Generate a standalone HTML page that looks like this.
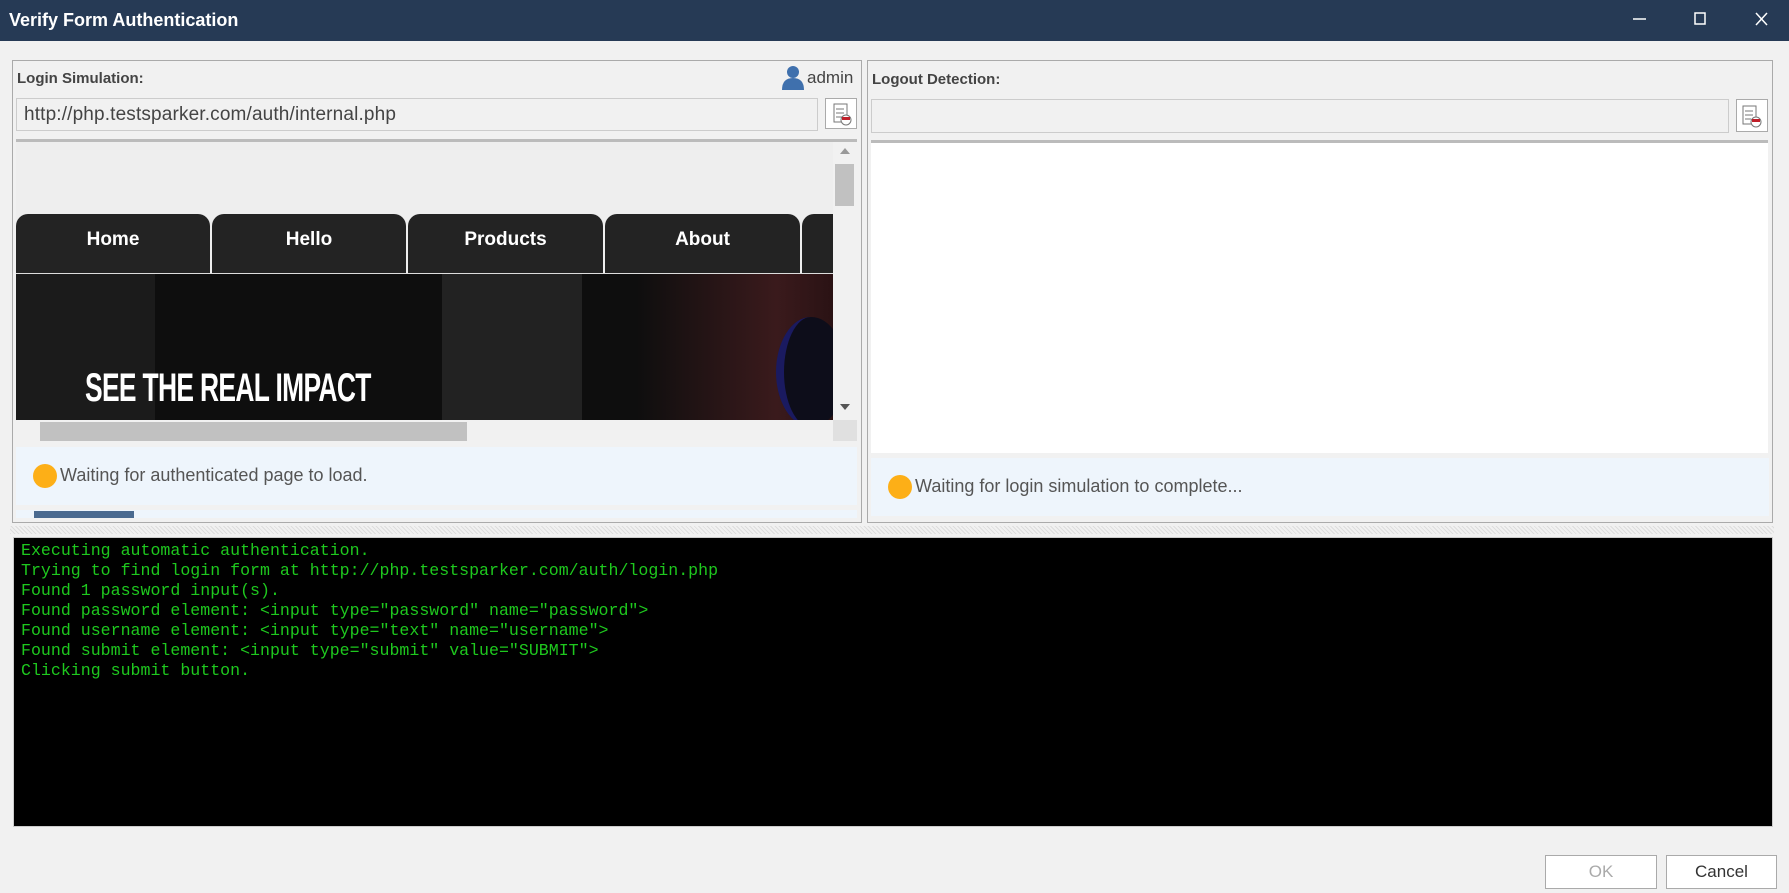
<!DOCTYPE html>
<html><head><meta charset="utf-8"><style>
*{margin:0;padding:0;box-sizing:border-box}
body{width:1789px;height:893px;background:#f1f1f1;position:relative;overflow:hidden;font-family:"Liberation Sans",sans-serif}
.a{position:absolute}
.title{left:0;top:0;width:1789px;height:41px;background:#263a55;color:#fff;font-weight:bold;font-size:18px;line-height:41px;padding-left:9px}
.panel{border:1px solid #aaa;background:#f1f1f1}
.lbl{font-weight:bold;font-size:15px;color:#444}
.box{border:1px solid #ccc;background:#f1f1f1;font-size:19px;color:#444;line-height:31px;padding-left:7px;letter-spacing:0.15px}
.btn{border:1px solid #aaa;background:#fff}
.stat{background:#eef5fc;font-size:18px;color:#555}
.dot{width:24px;height:24px;border-radius:50%;background:#fdaf17}
.tab{top:72px;height:59px;background:#232323;border-radius:12px 12px 0 0;color:#fff;font-weight:bold;font-size:19px;text-align:center;line-height:52px}
.term{font-family:"Liberation Mono",monospace;font-size:16.6px;color:#1ec81e;line-height:20px;white-space:pre}
</style></head><body>
<div class="a title">Verify Form Authentication</div>
<svg class="a" style="left:1630px;top:8px" width="150" height="22"><line x1="3" y1="11" x2="16" y2="11" stroke="#fff" stroke-width="1.5"/><rect x="65" y="5" width="10" height="11" fill="none" stroke="#fff" stroke-width="1.5"/><path d="M126 5L137 17M137 5L126 17" stroke="#fff" stroke-width="1.5"/></svg>

<div class="a panel" style="left:12px;top:60px;width:850px;height:463px"></div>
<div class="a lbl" style="left:17px;top:70px">Login Simulation:</div>
<svg class="a" style="left:780px;top:65px" width="26" height="25"><circle cx="13" cy="7" r="6" fill="#3f70ad"/><path d="M2 25Q2 13 13 13Q24 13 24 25Z" fill="#3f70ad"/></svg>
<div class="a" style="left:807px;top:68px;font-size:17px;color:#444">admin</div>
<div class="a box" style="left:16px;top:98px;width:802px;height:33px">http://php.testsparker.com/auth/internal.php</div>
<div class="a btn" style="left:825px;top:98px;width:32px;height:31px"><svg width="30" height="29"><rect x="8" y="5" width="13" height="18" fill="#fff" stroke="#777"/><path d="M10 10h8M10 14h8M10 18h6" stroke="#777"/><circle cx="20" cy="21" r="5" fill="#fff" stroke="#777"/><rect x="16" y="18" width="8" height="3" fill="#c0202a"/></svg></div>
<div class="a" style="left:16px;top:139px;width:841px;height:3px;background:#bbb"></div>
<div class="a" style="left:16px;top:142px;width:817px;height:278px;background:#eeeeee;overflow:hidden">
 <div class="a tab" style="left:0;width:194px">Home</div>
 <div class="a tab" style="left:196px;width:194px">Hello</div>
 <div class="a tab" style="left:392px;width:195px">Products</div>
 <div class="a tab" style="left:589px;width:195px">About</div>
 <div class="a tab" style="left:786px;width:60px"></div>
 <div class="a" style="left:0;top:131px;width:817px;height:1px;background:#ddd"></div>
 <div class="a" style="left:0;top:132px;width:817px;height:146px;background:linear-gradient(90deg,#1b1b1b 0 139px,#0e0e0e 139px 426px,#222 426px 566px,#0e0e0e 566px 620px,#3a1a1c 760px,#2a1214 817px)"></div>
 <div class="a" style="left:760px;top:175px;width:70px;height:110px;border-radius:50%;background:#0d0d1a;border-left:8px solid #1a1a60"></div>
 <div class="a" style="left:69px;top:224px;color:#fff;font-weight:bold;font-size:40px;transform:scaleX(.66);transform-origin:left;letter-spacing:-1px;white-space:nowrap">SEE THE REAL IMPACT</div>
</div>
<div class="a" style="left:833px;top:142px;width:24px;height:278px;background:#f1f1f1"></div>
<div class="a" style="left:835px;top:164px;width:19px;height:42px;background:#c1c1c1"></div>
<div class="a" style="left:840px;top:148px;width:0;height:0;border:5px solid transparent;border-bottom:6px solid #999;border-top:0"></div>
<div class="a" style="left:840px;top:404px;width:0;height:0;border:5px solid transparent;border-top:6px solid #555;border-bottom:0"></div>
<div class="a" style="left:16px;top:420px;width:817px;height:21px;background:#f1f1f1"></div>
<div class="a" style="left:40px;top:422px;width:427px;height:19px;background:#c1c1c1"></div>
<div class="a" style="left:833px;top:420px;width:24px;height:21px;background:#e0e0e0"></div>
<div class="a stat" style="left:16px;top:447px;width:841px;height:58px"></div>
<div class="a dot" style="left:33px;top:464px"></div>
<div class="a" style="left:60px;top:465px;font-size:18px;color:#555">Waiting for authenticated page to load.</div>
<div class="a" style="left:16px;top:510px;width:841px;height:8px;background:#eef5fc"></div>
<div class="a" style="left:34px;top:511px;width:100px;height:7px;background:#4a6a90"></div>

<div class="a panel" style="left:867px;top:60px;width:906px;height:463px"></div>
<div class="a lbl" style="left:872px;top:71px">Logout Detection:</div>
<div class="a box" style="left:871px;top:99px;width:858px;height:34px"></div>
<div class="a btn" style="left:1736px;top:99px;width:32px;height:33px"><svg width="30" height="31"><rect x="6" y="6" width="13" height="18" fill="#fff" stroke="#777"/><path d="M8 11h8M8 15h8M8 19h6" stroke="#777"/><circle cx="19" cy="22" r="5" fill="#fff" stroke="#777"/><rect x="15" y="19" width="8" height="3" fill="#c0202a"/></svg></div>
<div class="a" style="left:871px;top:140px;width:897px;height:3px;background:#bbb"></div>
<div class="a" style="left:871px;top:143px;width:897px;height:310px;background:#fff"></div>
<div class="a stat" style="left:871px;top:458px;width:898px;height:58px"></div>
<div class="a dot" style="left:888px;top:475px"></div>
<div class="a" style="left:915px;top:476px;font-size:18px;color:#555">Waiting for login simulation to complete...</div>

<div class="a" style="left:10px;top:526px;width:1764px;height:8px;background:repeating-linear-gradient(45deg,#ddd 0 1px,#f1f1f1 1px 3px)"></div>
<div class="a term" style="left:13px;top:537px;width:1760px;height:290px;background:#000;border:1px solid #ccc;padding:3px 0 0 7px">Executing automatic authentication.
Trying to find login form at http://php.testsparker.com/auth/login.php
Found 1 password input(s).
Found password element: &lt;input type="password" name="password"&gt;
Found username element: &lt;input type="text" name="username"&gt;
Found submit element: &lt;input type="submit" value="SUBMIT"&gt;
Clicking submit button.</div>

<div class="a btn" style="left:1545px;top:855px;width:112px;height:34px;text-align:center;line-height:32px;font-size:17px;color:#aaa">OK</div>
<div class="a btn" style="left:1666px;top:855px;width:111px;height:34px;text-align:center;line-height:32px;font-size:17px;color:#333">Cancel</div>
</body></html>
